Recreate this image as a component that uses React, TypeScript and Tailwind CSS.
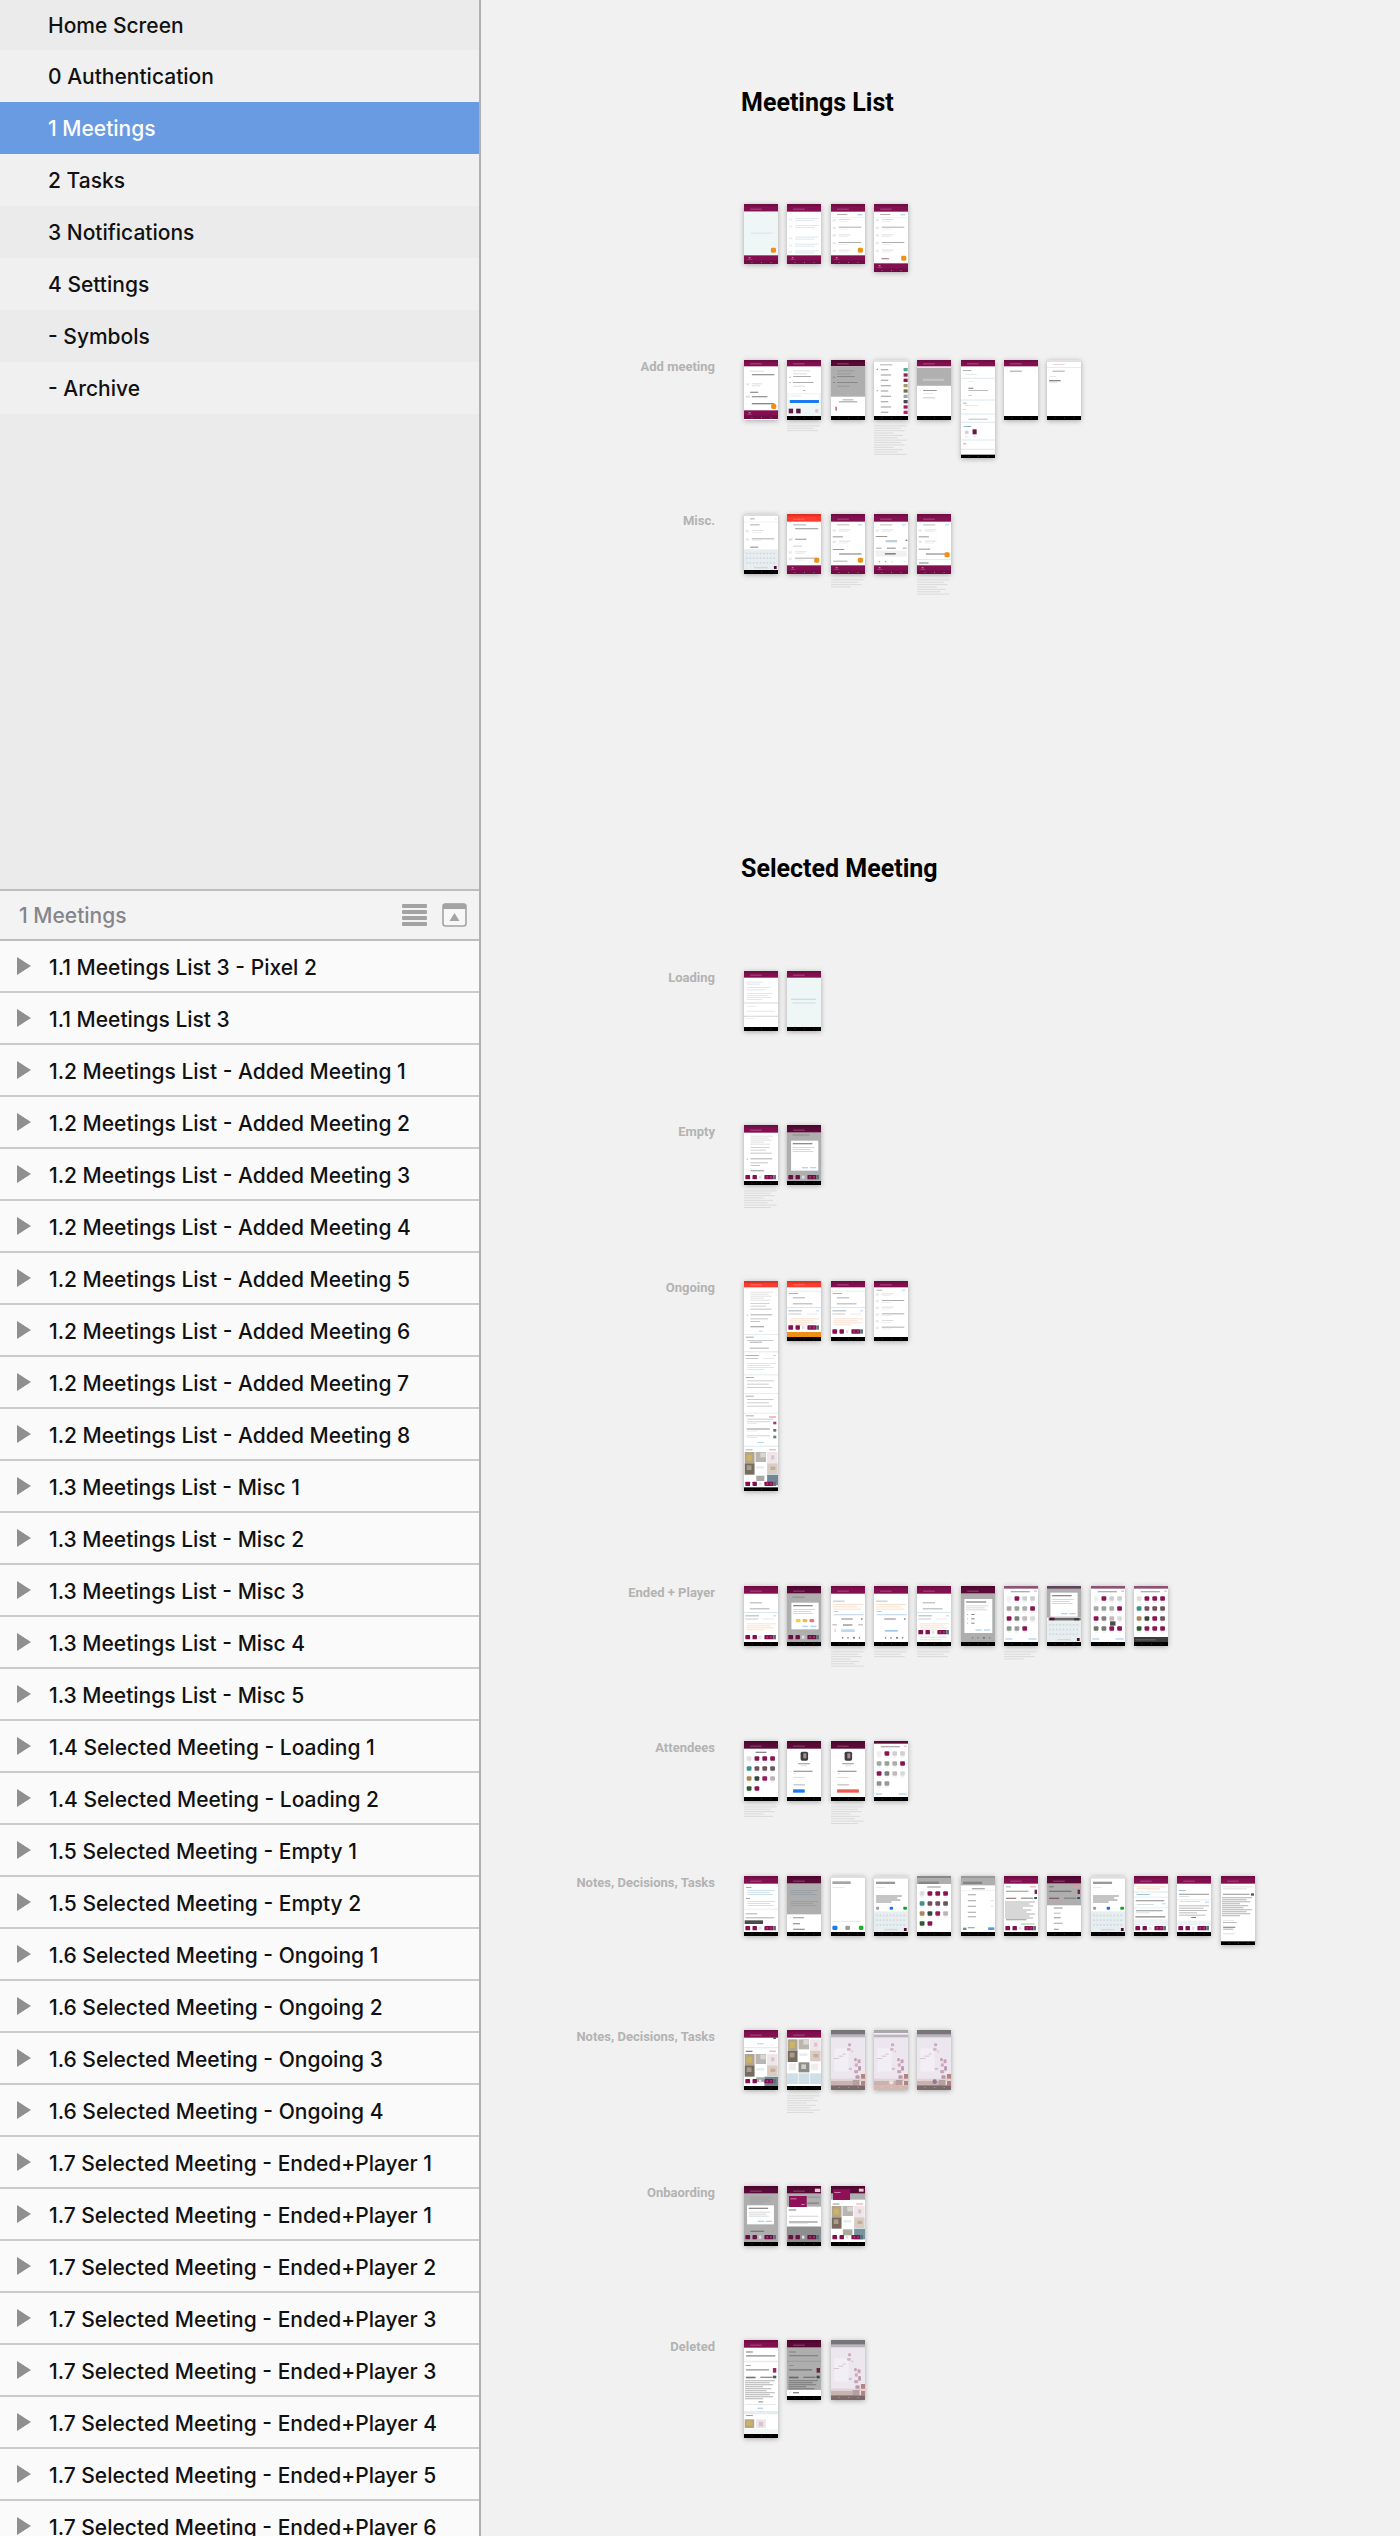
import type { ReactNode } from "react";

type Shape = [x: number, y: number, w: number, h: number, fill: string, round?: number];

const PLUM = "#830f50";
const DARK_PLUM = "#5a0a37";
const RED = "#ff3b2d";
const ORANGE = "#ee9018";
const BLUE = "#1a7af0";
const MINT = "#eef6f6";
const LINK = "#b4d3f1";
const INK = "#aeaeae";
const SOFT = "#dedede";
const MIST = "#e6edf0";
const DIM = "#aeaeae";
const WIDTHS = [1, 0.82, 0.94, 0.6, 0.88, 0.72];

/* Drawing helpers: an artboard is 100 units wide and normally 180 high. */

const lines = (x: number, y: number, w: number, n: number, gap: number, fill = SOFT, h = 3): Shape[] =>
  Array.from({ length: n }, (_, i): Shape => [x, y + i * gap, w * WIDTHS[i % 6], h, fill]);

const bar = (fill = PLUM, h = 23): Shape[] => [
  [0, 0, 100, h, fill],
  [0, 0, 100, 7, "#00000022"],
  [18, h - 9, 34, 3, "#ffffff44"],
];

const nav = (y = 168, h = 12): Shape[] => [
  [0, y, 100, h, "#000000"],
  [22, y + 5, 3, 2, "#4a4a4a"],
  [50, y + 5, 3, 2, "#4a4a4a"],
  [78, y + 5, 3, 2, "#4a4a4a"],
];

const tabs = (y = 154): Shape[] => [
  [0, y, 100, 26, PLUM],
  [0, y + 15, 100, 11, "#00000022"],
  [14, y + 5, 5, 4, "#ffffff77"],
  [10, y + 11, 14, 2, "#ffffff44"],
  [22, y + 20, 3, 3, "#ffffff55"],
  [50, y + 20, 3, 3, "#ffffff55"],
  [78, y + 20, 3, 3, "#ffffff55"],
];

const fab = (x: number, y: number): Shape[] => [[x, y, 15, 15, ORANGE, 4]];

const agenda = (y: number, n: number, gap: number, dark = INK): Shape[] =>
  Array.from({ length: n }).flatMap((_, i): Shape[] => [
    [5, y + i * gap, 9, 7, "#e9e9e9"],
    [23, y + i * gap, i % 2 ? 66 : 34, 3, i % 2 ? dark : SOFT],
    [23, y + 6 + i * gap, 28, 2, "#e6e6e6"],
  ]);

const chips = (y = 150, tone = PLUM): Shape[] => [
  [4, y, 14, 13, tone, 2],
  [25, y, 13, 13, tone, 2],
  [44, y + 2, 7, 9, "#e5dfe3"],
  [60, y, 26, 13, tone, 2],
  [66, y + 3, 5, 7, "#9a3a70"],
  [77, y + 3, 5, 7, "#9a3a70"],
  [86, y, 8, 13, "#5d6f7c"],
];

const keyboard = (y: number, end = 168): Shape[] => [
  [0, y, 100, end - y, "#e7eef0"],
  ...[10, 24, 38].flatMap((dy) =>
    Array.from({ length: 9 }, (_, i): Shape => [6 + i * 10, y + dy, 5, 5, "#d0dade"]),
  ),
  [30, end - 9, 40, 4, "#cfd9dc"],
  [88, end - 12, 8, 9, "#4d0c32"],
];

const dialog = (x: number, y: number, w: number, h: number): Shape[] => [
  [x, y, w, h, "#ffffff"],
  [x + 5, y + 7, w * 0.72, 4, "#8c8c8c"],
  ...lines(x + 5, y + 19, w - 16, 3, 6, "#d8d8d8"),
  [x + w * 0.4, y + h - 11, 18, 4, LINK],
  [x + w * 0.7, y + h - 11, 18, 4, LINK],
];

const FACES = {
  mixed: ["#eeeeee", "#8a1453", "#cfcfcf", "#cfcfcf", "#a6a6a6", "#96a396", "#adadad", "#8a1453", "#8a1453", "#7c7c7c", "#c4b9bd", "#dadada", "#8a968a", "#999999", "#8a1453"],
  late: ["#eeeeee", "#8a1453", "#cfcfcf", "#cfcfcf", "#a6a6a6", "#96a396", "#adadad", "#8a1453", "#8a1453", "#808080", "#c4b9bd", "#dadada", "#6d756d", "#777777", "#8a1453", "#8a1453"],
  color: ["#dddddd", "#8a1453", "#8a1453", "#8a1453", "#3f9088", "#735060", "#6d5257", "#66585c", "#a38a5a", "#35463d", "#961c5c", "#c3aeba", "#31592f", "#8a1453"],
  full: ["#dddddd", "#8a1453", "#8a1453", "#8a1453", "#3f9088", "#735060", "#6d5257", "#66585c", "#a38a5a", "#35463d", "#8a1453", "#695560", "#31592f", "#8a1453", "#8a1453", "#8a1453"],
};

const faces = (y: number, palette: string[], gap = 30): Shape[] =>
  palette.flatMap((fill, i): Shape[] => {
    const x = 8 + (i % 4) * 23;
    const top = y + Math.floor(i / 4) * gap;
    return [
      [x, top, 14, 13, fill, 3],
      [x + 2, top + 16, 10, 2, "#dedede"],
    ];
  });

const people = (fill: string, palette: string[]): Shape[] => [
  [0, 0, 100, 8, fill],
  [20, 15, 56, 4, INK],
  [88, 14, 9, 3, "#f0a6b4"],
  ...faces(31, palette),
  [4, 157, 20, 4, LINK],
  [72, 157, 24, 4, LINK],
  ...nav(),
];

const photos = (y: number): Shape[] => [
  [2, y, 29, 34, "#b3a48f"],
  [8, y + 8, 15, 18, "#cdb463"],
  [34, y, 31, 30, "#b9b5b1"],
  [48, y + 2, 16, 14, "#d9d7d5"],
  [68, y, 31, 34, "#eee6ea"],
  [80, y + 10, 9, 12, "#dcc3cb"],
  [2, y + 34, 29, 34, "#776b60"],
  [8, y + 40, 14, 14, "#a99c8b"],
  [36, y + 42, 24, 8, "#e7eef2"],
  [68, y + 34, 31, 32, "#d9ccc0"],
  [78, y + 44, 14, 10, "#c3ada2"],
];

const blossom = (top: string, bottom: string): Shape[] => [
  [0, 0, 100, 180, "#ece7ef"],
  [10, 55, 42, 70, "#f2eef5"],
  [0, 0, 100, 14, top],
  [0, 14, 100, 8, "#b9b6bb"],
  [8, 84, 16, 3, "#d9c4d1"],
  [22, 77, 14, 3, "#d9c4d1"],
  [34, 71, 9, 3, "#d9c4d1"],
  [50, 40, 9, 9, "#cbabbd", 3],
  [47, 54, 11, 8, "#d3b5c5", 3],
  [60, 62, 5, 5, "#dcc3d0"],
  [68, 84, 8, 10, "#c9a2b6", 3],
  [78, 88, 9, 12, "#c9a2b6", 3],
  [70, 100, 9, 10, "#cfadbe", 3],
  [80, 108, 8, 14, "#bd93aa", 3],
  [68, 120, 12, 10, "#c9a5b8", 3],
  [72, 136, 12, 18, "#bd96aa", 3],
  [52, 113, 10, 7, "#d8becb", 3],
  [88, 132, 12, 34, "#b5827f"],
  [0, 146, 100, 7, "#e0d2d5"],
  [0, 153, 74, 14, "#c9b3af"],
  [64, 150, 20, 16, "#b79f9f"],
  [0, 166, 100, 14, bottom],
  [22, 172, 4, 2, "#ffffff66"],
  [50, 172, 4, 2, "#ffffff66"],
  [78, 172, 4, 2, "#ffffff66"],
];

const section = (y: number, h: number): Shape[] => [
  [0, y, 100, 3, MIST],
  [5, y + 8, 24, 3, INK],
  ...lines(9, y + 18, 78, Math.max(1, Math.floor((h - 18) / 10)), 10, "#cccccc"),
];

const dimmed = (h = 168): Shape[] => [...bar(DARK_PLUM), [0, 23, 100, h - 23, DIM]];
const essay = (y: number, n: number): Shape[] => lines(3, y, 88, n, 6, "#c4c4c4", 4);

interface Board {
  art: Shape[];
  height?: "tall" | "taller" | "longer" | "longest";
  paper?: string;
  note?: number;
}

const HEIGHTS = {
  normal: { units: 180, box: "h-[60px]" },
  tall: { units: 204, box: "h-[68px]" },
  taller: { units: 294, box: "h-[98px]" },
  longer: { units: 207, box: "h-[69px]" },
  longest: { units: 630, box: "h-[210px]" },
};

const meetingDoc: Shape[] = [
  ...lines(19, 32, 66, 5, 6, "#e2e2e2"),
  ...lines(19, 66, 56, 2, 8, "#d2d2d2"),
  [19, 83, 62, 3, "#c6c6c6"],
  [8, 101, 4, 3, "#bbbbbb"],
  [19, 100, 64, 3, INK],
  [19, 112, 52, 3, "#c6c6c6"],
  [19, 120, 28, 3, "#c6c6c6"],
  [19, 135, 40, 4, INK],
];

const orangeNotes = (y: number): Shape[] => [
  [4, y, 40, 3, "#a4b4c4"],
  [86, y, 8, 3, LINK],
  [4, y + 10, 38, 2, INK],
  [56, y + 10, 34, 2, SOFT],
  ...lines(8, y + 24, 86, 4, 6, "#fae0cd"),
];

const ongoing: Shape[] = [
  [0, 29, 100, 3, MIST],
  [5, 36, 28, 3, "#a4b4c4"],
  [17, 49, 36, 3, INK],
  [17, 67, 58, 3, INK],
  [0, 78, 100, 3, "#dbe6ec"],
  ...orangeNotes(88),
];

const player: Shape[] = [
  ...bar(),
  [6, 44, 34, 3, "#b5c0ca"],
  ...lines(6, 54, 88, 3, 7, "#fae0cd"),
  [8, 75, 14, 3, "#a9cdf0"],
  [8, 84, 88, 4, "#cbdff0"],
  [30, 97, 34, 4, "#a5a5a5"],
  [88, 97, 5, 4, "#777777"],
];

const playerControls: Shape[] = [
  [32, 153, 4, 5, "#888888"],
  [48, 153, 4, 5, "#888888"],
  [65, 153, 5, 5, "#666666"],
  [82, 153, 4, 5, "#888888"],
];

const profile = (action: Shape): Shape[] => [
  ...bar(DARK_PLUM),
  [40, 32, 22, 27, "#3c3a42", 5],
  [48, 37, 9, 15, "#a98e86"],
  [33, 66, 34, 4, INK],
  [42, 73, 16, 3, SOFT],
  [8, 90, 3, 3, SOFT],
  [19, 89, 56, 4, "#a0a0a0"],
  [19, 96, 8, 2, SOFT],
  [19, 108, 34, 3, SOFT],
  [19, 130, 34, 3, "#b5b5b5"],
  action,
  ...nav(),
];

const noteEditor: Shape[] = [
  [0, 0, 100, 8, "#dedede"],
  [6, 17, 56, 7, "#999999"],
  [6, 33, 26, 2, SOFT],
  ...lines(6, 58, 76, 4, 6, "#a8a8a8", 4),
  [6, 92, 9, 9, "#9c9c9c", 3],
  [46, 92, 10, 9, "#1673e6", 3],
  [86, 92, 11, 9, "#0fa51f", 3],
  ...keyboard(106),
  ...nav(),
];

const taskList = (shade: boolean): Shape[] => [
  ...(shade ? dimmed(88) : bar()),
  [6, 31, 14, 3, shade ? "#777777" : "#94b0c0"],
  [76, 31, 18, 3, "#f19a9c"],
  [6, 44, 66, 4, shade ? "#777777" : INK],
  [90, 41, 7, 13, "#7d1c50"],
  [6, 65, 30, 4, shade ? "#855f66" : "#a78686"],
  [50, 65, 36, 3, "#777777"],
  [89, 63, 8, 6, "#3e4c5e"],
];

const row1: Board[] = [
  { art: [...bar(), [0, 23, 100, 131, MINT], [20, 86, 64, 3, "#d8e5e8"], ...fab(79, 131), ...tabs()] },
  { art: [...bar(), ...[42, 63, 98, 119, 139].flatMap((y) => [...lines(24, y, 70, 2, 6, "#dfe8ed"), [5, y + 2, 10, 6, "#eeeeee"] as Shape]), ...tabs()] },
  { art: [...bar(), [18, 30, 30, 3, INK], [78, 30, 14, 4, LINK], [0, 41, 100, 1, SOFT], ...agenda(45, 5, 23), ...fab(79, 131), ...tabs()] },
  { art: [...bar(), [18, 30, 30, 3, INK], [78, 30, 14, 4, LINK], [0, 41, 100, 1, SOFT], ...agenda(45, 5, 23), [22, 162, 22, 4, "#b28f96"], ...fab(80, 155), ...tabs(178)], height: "tall" },
];

const row2: Board[] = [
  { art: [...bar(PLUM, 19), [18, 32, 40, 3, SOFT], [23, 42, 66, 4, "#999999"], [7, 70, 8, 6, "#d5f0d8"], ...lines(23, 70, 30, 2, 6), [18, 95, 24, 4, "#999999"], [5, 107, 12, 6, SOFT], [23, 108, 46, 4, "#999999"], [23, 129, 66, 4, "#888888"], ...fab(80, 132), ...tabs(151)] },
  { art: [...bar(PLUM, 19), ...lines(18, 31, 50, 2, 9), [18, 48, 52, 3, INK], [7, 50, 4, 3, INK], [18, 66, 60, 3, INK], [7, 66, 4, 3, INK], [18, 77, 36, 3, SOFT], [48, 90, 6, 3, INK], [0, 99, 100, 69, MINT], [5, 103, 90, 29, "#ffffff"], [8, 107, 34, 2, SOFT], [8, 120, 86, 9, BLUE], [5, 146, 13, 14, "#6d1747"], [27, 146, 13, 14, "#541a40"], [83, 147, 9, 11, "#d9cfd2"], ...nav()], note: 3 },
  { art: [...bar(DARK_PLUM, 19), [0, 19, 100, 91, DIM], ...lines(18, 31, 50, 2, 9, "#999999"), [7, 50, 4, 3, "#777777"], [18, 48, 52, 3, "#888888"], [7, 66, 4, 3, "#777777"], [18, 66, 60, 3, "#888888"], [18, 77, 36, 3, "#999999"], [34, 118, 32, 3, INK], [23, 124, 54, 3, "#999999"], [13, 140, 4, 12, "#a85c68"], ...nav()] },
  { art: [[0, 0, 100, 6, "#e2e2e2"], [18, 13, 36, 3, INK], ...Array.from({ length: 9 }).flatMap((_, i): Shape[] => [[20, 27 + i * 16, i % 2 ? 30 : 22, 4, "#b2b2b2"], [87, 24 + i * 16, 12, 10, ["#56a78f", "#93265d", "#802050", "#a39b6a", "#716f4e", "#9aa6b4", "#4a4650", "#a0195f", "#b32868"][i]]]), [8, 26, 3, 4, "#777777"], [8, 90, 3, 4, "#c98a98"], ...nav()], note: 13 },
  { art: [...bar(PLUM, 19), [0, 23, 100, 53, "#b0b0b0"], [17, 56, 62, 7, "#c4c4c4"], [0, 75, 100, 2, "#c9a0c4"], [8, 90, 3, 3, SOFT], [18, 90, 40, 3, "#999999"], [18, 99, 30, 2, SOFT], [18, 112, 36, 3, "#c9c9c9"], ...nav()] },
  { art: [...bar(PLUM, 19), [6, 30, 24, 3, INK], [10, 42, 36, 2, SOFT], ...[53, 118, 160, 185, 238, 266].map((y): Shape => [0, y, 100, 4, MIST]), [22, 63, 14, 2, SOFT], [22, 83, 14, 4, "#999999"], [22, 90, 58, 3, "#bbbbbb"], [22, 105, 10, 3, "#cccccc"], [6, 128, 10, 3, INK], [10, 135, 40, 2, SOFT], [6, 147, 10, 2, "#e9bfc0"], [22, 176, 56, 3, "#bdbdbd"], [8, 198, 22, 3, "#8faeca"], [12, 212, 10, 10, "#ddcdd4"], [34, 208, 12, 15, "#6b1548"], [12, 229, 8, 3, SOFT], [35, 229, 8, 3, SOFT], [6, 250, 10, 3, "#df9b9b"], ...nav(284, 10)], height: "taller" },
  { art: [...bar(PLUM, 19), [8, 32, 3, 2, SOFT], [18, 32, 34, 3, "#9b9b9b"], [92, 32, 3, 2, SOFT], ...nav()] },
  { art: [[0, 0, 100, 6, "#e2e2e2"], [18, 13, 34, 2, "#dfc4c4"], [0, 21, 100, 2, "#e4dfe2"], [16, 32, 36, 3, "#aaaaaa"], [6, 49, 20, 2, SOFT], [6, 60, 34, 4, "#888888"], [6, 67, 24, 2, SOFT], ...nav()] },
];

const row3: Board[] = [
  { art: [[0, 0, 100, 6, "#dcdcdc"], [18, 13, 13, 3, "#aaaaaa"], [90, 13, 4, 3, SOFT], [0, 23, 100, 2, MIST], [18, 31, 28, 3, INK], ...agenda(48, 2, 25), [18, 98, 24, 3, "#888888"], ...keyboard(106), ...nav()] },
  { art: [...bar(RED), [18, 31, 38, 3, INK], [24, 42, 68, 4, INK], [6, 73, 10, 7, "#cfead2"], [24, 74, 33, 4, INK], [18, 95, 26, 3, "#cccccc"], ...agenda(112, 2, 19), ...fab(80, 131), ...tabs()] },
  { art: [...bar(), [18, 31, 36, 3, "#bbbbbb"], [78, 31, 14, 3, LINK], ...agenda(46, 1, 23), [5, 67, 30, 3, "#999999"], ...agenda(80, 1, 20), [5, 105, 34, 3, "#999999"], [24, 118, 66, 4, "#999999"], [6, 140, 42, 3, INK], ...fab(79, 131), ...tabs()], note: 4 },
  { art: [...bar(), [18, 31, 36, 3, "#bbbbbb"], [82, 31, 12, 3, LINK], ...agenda(46, 1, 23), [5, 66, 34, 3, "#999999"], [34, 78, 34, 7, "#c0d0dc"], [93, 77, 5, 4, "#777777"], [6, 101, 16, 3, INK], [38, 101, 26, 3, "#888888"], [84, 101, 12, 3, INK], [4, 110, 92, 18, "#f1f1f1"], [32, 117, 32, 5, "#888888"], [14, 141, 4, 4, INK], [32, 141, 4, 4, INK], [50, 141, 4, 4, SOFT], [88, 141, 4, 4, SOFT], ...tabs()] },
  { art: [...bar(), [18, 31, 36, 3, "#bbbbbb"], [82, 31, 12, 3, LINK], ...agenda(46, 1, 23), [5, 67, 30, 3, "#999999"], ...agenda(80, 1, 20), [5, 104, 34, 3, "#999999"], [26, 118, 60, 4, "#999999"], [0, 136, 100, 2, SOFT], [6, 144, 28, 6, "#c0c0c0"], ...fab(81, 115), ...tabs()], note: 7 },
];

const loading: Board[] = [
  { art: [...bar(PLUM, 20), ...lines(8, 32, 48, 2, 6, "#dce8ef"), ...lines(8, 48, 68, 2, 7, "#dfe8ed"), ...lines(8, 66, 76, 4, 6, "#dfe8ed"), [0, 94, 100, 4, "#e2e2e2"], [8, 106, 30, 2, "#e5e5e5"], [8, 119, 84, 3, "#e2e8ec"], [0, 134, 100, 4, "#dedede"], [8, 142, 24, 2, "#e8e8e8"], ...nav()] },
  { art: [...bar(PLUM, 20), [12, 83, 74, 4, "#c9dfe4"], [16, 94, 68, 4, "#d3e5e9"], ...nav()], paper: MINT },
];

const empty: Board[] = [
  { art: [...bar(), ...meetingDoc, ...chips(), ...nav()], note: 8 },
  { art: [...dimmed(), [16, 28, 50, 4, "#949494"], ...dialog(12, 47, 80, 90), ...chips(150, "#690f42"), ...nav()] },
];

const ongoingRow: Board[] = [
  {
    art: [
      ...bar(RED, 19), ...meetingDoc, [44, 149, 10, 3, LINK],
      ...section(159, 12), [17, 182, 36, 3, INK], [17, 200, 56, 3, INK],
      [0, 211, 100, 3, "#dbe6ec"], ...orangeNotes(222),
      ...section(280, 48), ...section(336, 52),
      ...section(395, 0), [74, 406, 20, 4, "#f29a9c"],
      ...[420, 442, 462].flatMap((y, i): Shape[] => [[8, y, 68, 4, i === 1 ? INK : SOFT], [8, y + 7, 30, 2, SOFT], [86, y + 2, 9, 8, ["#a33a6e", "#756a72", "#5e8579"][i]]]),
      [40, 483, 18, 3, LINK], [0, 494, 100, 4, MIST], [5, 505, 20, 3, INK], [74, 505, 20, 3, "#f29a9c"],
      ...photos(513), [68, 581, 32, 32, "#708795"], [36, 584, 24, 16, "#a9abab"], ...chips(602), ...nav(619),
    ],
    height: "longest",
  },
  { art: [...bar(RED, 19), ...ongoing, ...chips(133), [0, 153, 100, 15, ORANGE], ...nav()] },
  { art: [...bar(PLUM, 19), ...ongoing, ...chips(145), ...nav()] },
  { art: [...bar(PLUM, 19), [8, 26, 16, 3, INK], [82, 26, 10, 3, LINK], ...agenda(37, 6, 20), ...nav()] },
];

const ended: Board[] = [
  { art: [...bar(), ...ongoing.slice(2), ...chips(147), ...nav()] },
  { art: [...dimmed(), [16, 32, 36, 3, "#8c8c8c"], ...dialog(13, 50, 80, 80), [26, 99, 14, 10, "#f2cf45", 4], [46, 99, 14, 10, "#f3ba46", 4], [66, 99, 14, 10, "#ed7373", 4], ...chips(147, "#690f42"), ...nav()] },
  { art: [...player, [4, 115, 14, 3, INK], [35, 115, 28, 4, "#8f8f8f"], [80, 115, 14, 3, INK], [10, 128, 4, 10, "#f3cccc"], [30, 130, 40, 8, "#bdd9f3"], ...playerControls, ...nav()], note: 7 },
  { art: [...player, [32, 132, 38, 5, "#9fc7ee"], ...playerControls, ...nav()], note: 3 },
  { art: [...bar(), ...ongoing.slice(2), ...chips(132), ...lines(8, 152, 80, 2, 8), ...nav()], note: 3 },
  { art: [...dimmed(), ...dialog(10, 39, 82, 102), ...[84, 97, 110].flatMap((y): Shape[] => [[18, y, 3, 3, INK], [30, y, 10, 3, "#888888"]]), ...playerControls, ...nav()] },
  { art: people("#8c5374", FACES.mixed), note: 4 },
  { art: [[0, 0, 100, 95, DIM], [0, 0, 100, 8, "#62435a"], ...dialog(10, 20, 80, 72), [5, 96, 94, 8, "#666666"], [8, 95, 14, 8, "#58102f"], [80, 96, 14, 8, "#3d3d3d"], ...keyboard(104), ...nav()] },
  { art: [...people("#8c5374", FACES.late), [56, 106, 16, 13, "#4d4d4d"]] },
  { art: [...people("#8c5374", FACES.full), [0, 153, 100, 15, "#3b3b3b"], [4, 160, 60, 3, "#666666"]] },
];

const attendees: Board[] = [
  { art: [...bar(DARK_PLUM), [34, 32, 32, 4, "#888888"], ...faces(46, FACES.color), ...nav()], note: 5 },
  { art: profile([18, 145, 34, 10, BLUE]) },
  { art: profile([18, 145, 64, 10, "#ee5c50"]), note: 8 },
  { art: people(DARK_PLUM, FACES.mixed.slice(0, 14)) },
];

const notes: Board[] = [
  { art: [...bar(), [6, 33, 16, 3, "#aaaaaa"], ...lines(10, 42, 80, 3, 6, "#cfe0ee"), [6, 66, 12, 3, "#aaaaaa"], ...lines(10, 75, 82, 3, 6, "#cfe0ee"), [0, 98, 100, 3, MIST], [5, 112, 34, 3, INK], [5, 124, 84, 3, INK], [2, 133, 54, 11, "#4a4a4a"], ...chips(150), ...nav()] },
  { art: [...dimmed(115), ...lines(10, 42, 80, 3, 6, "#99a1a7"), ...lines(10, 75, 82, 3, 6, "#99a1a7"), [8, 123, 4, 4, SOFT], [18, 123, 32, 4, INK], [18, 141, 20, 4, "#999999"], [18, 158, 34, 4, "#999999"], ...nav()] },
  { art: [[0, 0, 100, 6, "#dedede"], [4, 16, 54, 8, "#a5a5a5"], [4, 33, 36, 2, SOFT], [4, 135, 82, 2, "#dedede"], [4, 149, 15, 13, BLUE, 4], [42, 149, 14, 13, "#9b9b9b", 4], [82, 149, 13, 13, "#16b429", 4], ...nav()] },
  { art: noteEditor },
  { art: [[0, 0, 100, 24, DIM], [0, 0, 100, 6, "#888888"], [4, 17, 60, 7, "#858585"], [30, 31, 40, 4, INK], ...faces(46, FACES.color), ...nav()] },
  { art: [[0, 0, 100, 28, DIM], [0, 0, 100, 6, "#999999"], [6, 17, 56, 7, "#858585"], [32, 36, 38, 4, INK], [0, 43, 100, 1, SOFT], ...[54, 72, 89, 107, 120].flatMap((y): Shape[] => [[20, y, 24, 4, "#bababa"]]), [88, 72, 7, 3, SOFT], [88, 89, 7, 3, SOFT], [6, 155, 10, 7, "#62958c"], [20, 153, 20, 4, INK], [80, 154, 18, 8, "#4a99ee"], ...nav()] },
  { art: [...taskList(false), ...essay(76, 9), [6, 129, 60, 4, INK], [50, 142, 40, 4, "#a9dfa9"], ...chips(150), ...nav()] },
  { art: [...taskList(true), [20, 94, 26, 4, "#aaaaaa"], [20, 110, 20, 3, "#bbbbbb"], [20, 123, 20, 4, "#aaaaaa"], [20, 140, 26, 4, "#bbbbbb"], [20, 158, 14, 4, "#aaaaaa"], ...nav()] },
  { art: noteEditor },
  { art: [...bar(), ...lines(8, 31, 84, 2, 6, "#f6dfca"), [0, 46, 100, 4, MIST], [8, 54, 38, 3, "#9fbfd2"], [0, 62, 100, 3, MIST], [5, 72, 84, 4, "#a5a5a5"], [8, 84, 50, 3, "#d5dce0"], [82, 82, 12, 3, LINK], [0, 94, 100, 3, MIST], [6, 102, 78, 4, INK], [6, 109, 40, 3, SOFT], [4, 120, 88, 5, "#a5a5a5"], [0, 130, 100, 18, "#edf2f4"], ...chips(150), ...nav()] },
  { art: [...bar(), [6, 42, 20, 3, "#9fbfd2"], [6, 53, 88, 4, INK], [6, 60, 30, 3, SOFT], [0, 70, 100, 3, MIST], [8, 75, 60, 3, SOFT], [82, 77, 12, 3, LINK], ...lines(6, 88, 88, 5, 7, "#bdbdbd"), [42, 123, 14, 3, "#777777"], [0, 134, 100, 14, "#edf2f4"], ...chips(150), ...nav()] },
  { art: [...bar(), ...lines(6, 31, 86, 2, 6), [6, 53, 78, 4, INK], [88, 52, 9, 7, "#555555"], ...essay(63, 10), [6, 132, 32, 2, SOFT], [6, 138, 40, 3, "#bbbbbb"], [6, 152, 36, 4, "#999999"], [6, 158, 30, 3, INK], [6, 172, 36, 3, SOFT], ...nav(196, 11)], height: "longer" },
];

const media: Board[] = [
  { art: [...bar(), [86, 22, 8, 5, "#3d5560"], [38, 40, 20, 3, LINK], [0, 51, 100, 4, MIST], [5, 62, 20, 4, "#888888"], [74, 62, 20, 3, "#f29a9c"], ...photos(72), [60, 140, 40, 28, "#6f858f"], [36, 142, 24, 14, "#9da9a5"], ...chips(147), ...nav()] },
  { art: [...bar(), ...photos(28), [34, 97, 32, 30, "#8d8d86"], [42, 103, 14, 14, "#c9cfcc"], [5, 101, 22, 20, "#f1ecee"], [70, 101, 22, 20, "#f1ecee"], [0, 130, 32, 32, "#cfdfe7"], [34, 130, 32, 32, "#cfdfe7"], [68, 130, 32, 32, "#cfdfe7"], ...nav()], note: 8 },
  { art: blossom("#77757a", "#7b6a6b") },
  { art: [...blossom("#f0eef1", "#d5b7b0"), [0, 0, 100, 9, "#aaa7ac"], [44, 150, 14, 14, "#e8dedd", 7]] },
  { art: [...blossom("#77757a", "#7b6a6b"), [46, 148, 12, 14, "#8c7d8c", 5]] },
];

const onboarding: Board[] = [
  { art: [...dimmed(), ...lines(18, 32, 66, 4, 6, "#a2a2a2"), ...dialog(9, 58, 79, 57), [19, 134, 40, 4, "#777777"], ...chips(147, "#690f42"), ...nav()] },
  { art: [...dimmed(), [82, 8, 16, 10, "#e6c8d7"], [60, 32, 36, 3, "#8f8f8f"], [60, 50, 34, 3, "#777777"], [0, 62, 100, 60, "#ffffff"], [5, 70, 22, 4, "#9b9b9b"], [6, 89, 86, 4, SOFT], [6, 106, 84, 4, "#9b9b9b"], [6, 112, 56, 2, SOFT], [0, 122, 100, 46, "#8e8e8e"], [6, 30, 52, 33, "#8f1059"], [10, 37, 18, 3, "#c981a8"], [42, 54, 10, 3, "#c981a8"], ...chips(147, "#690f42"), ...nav()] },
  { art: [...bar(DARK_PLUM), [82, 8, 14, 9, "#e6c8d7"], [0, 23, 100, 18, DIM], [6, 10, 50, 32, "#8f1059"], [10, 18, 18, 3, "#c981a8"], [5, 52, 20, 4, INK], [74, 52, 20, 4, "#f0b3b6"], ...photos(60), [68, 128, 32, 32, "#7594a0"], [35, 130, 28, 18, "#a9aa9c"], ...chips(147), ...nav()] },
];

const deleted: Board[] = [
  { art: [...bar(), [6, 34, 20, 4, "#999999"], [6, 45, 86, 5, "#a5a5a5"], [0, 62, 100, 5, MIST], [6, 75, 14, 3, "#94b0c0"], [6, 87, 68, 5, INK], [85, 84, 10, 14, "#922d60"], [6, 110, 28, 5, "#777777"], [48, 110, 36, 4, "#8e8e8e"], [85, 107, 10, 8, "#4c5b5e"], ...essay(120, 10), [42, 184, 14, 3, "#888888"], [4, 192, 90, 2, SOFT], [40, 203, 16, 4, LINK], [0, 213, 100, 10, MIST], [6, 225, 20, 3, "#80b0b0"], [2, 238, 28, 26, "#b8a583"], [8, 242, 14, 14, "#cdb463"], [36, 238, 28, 26, "#eee4e8"], [44, 245, 12, 14, "#dcc3cb"], [0, 268, 100, 14, MINT], ...nav(282)], height: "taller" },
  { art: [...dimmed(150), [6, 34, 20, 4, "#8c8c8c"], [6, 45, 86, 4, "#848484"], [0, 62, 100, 4, "#a0a0a0"], [6, 75, 14, 3, "#8a8f92"], [6, 87, 68, 5, "#808080"], [87, 84, 10, 14, "#67263f"], [6, 110, 28, 5, "#666666"], [48, 110, 36, 4, "#777777"], [87, 107, 9, 8, "#38464c"], ...lines(5, 120, 86, 5, 6, "#858585", 4), [6, 156, 4, 4, SOFT], [18, 156, 17, 4, "#888888"], ...nav()] },
  { art: blossom("#77757a", "#7b6a6b") },
];

function Artboard({ art, height, paper = "#ffffff", note }: Board) {
  const size = HEIGHTS[height ?? "normal"];
  return (
    <figure className="flex w-[34px] flex-col gap-[5px]" aria-hidden="true">
      <svg
        className={`w-full bg-white shadow-[0_1px_5px_rgba(0,0,0,0.3)] ${size.box}`}
        viewBox={`0 0 100 ${size.units}`}
        preserveAspectRatio="none"
      >
        <rect width="100" height={size.units} fill={paper} />
        {art.map(([x, y, w, h, fill, round], i) => (
          <rect key={i} x={x} y={y} width={w} height={h} fill={fill} rx={round} />
        ))}
      </svg>
      {note ? (
        <svg className="w-full" viewBox={`0 0 100 ${note * 7}`}>
          {lines(0, 1, 96, note, 7, "#dadada", 3).map(([x, y, w, h, fill], i) => (
            <rect key={i} x={x} y={y} width={w} height={h} fill={fill} />
          ))}
        </svg>
      ) : null}
    </figure>
  );
}

function Strip({ label, boards, size }: { label?: string; boards: Board[]; size: string }) {
  return (
    <div className={`flex shrink-0 gap-[29px] ${size}`}>
      <h3 className="w-[234px] shrink-0 text-right text-[13px] leading-[14px] font-bold whitespace-nowrap text-[#b3b3b3]">
        {label}
      </h3>
      <div className="grid w-[520px] shrink-0 grid-cols-12 items-start">
        {boards.map((board, i) => (
          <Artboard key={i} {...board} />
        ))}
      </div>
    </div>
  );
}

function Title({ children, size }: { children: ReactNode; size: string }) {
  return <h2 className={`shrink-0 pl-[260px] text-[25px] leading-[28px] font-bold text-black ${size}`}>{children}</h2>;
}

const pages = ["Home Screen", "0 Authentication", "1 Meetings", "2 Tasks", "3 Notifications", "4 Settings", "- Symbols", "- Archive"];

const layers = [
  "1.1 Meetings List 3 - Pixel 2",
  "1.1 Meetings List 3",
  ...[1, 2, 3, 4, 5, 6, 7, 8].map((n) => `1.2 Meetings List - Added Meeting ${n}`),
  ...[1, 2, 3, 4, 5].map((n) => `1.3 Meetings List - Misc ${n}`),
  ...[1, 2].map((n) => `1.4 Selected Meeting - Loading ${n}`),
  ...[1, 2].map((n) => `1.5 Selected Meeting - Empty ${n}`),
  ...[1, 2, 3, 4].map((n) => `1.6 Selected Meeting - Ongoing ${n}`),
  ...[1, 1, 2, 3, 3, 4, 5, 6].map((n) => `1.7 Selected Meeting - Ended+Player ${n}`),
];

function Sidebar() {
  return (
    <aside className="flex w-[481px] shrink-0 flex-col border-r-2 border-[#b0b0b0] bg-[#ebebeb] font-['Inter',sans-serif] text-[21px] leading-7 font-medium text-[#111111]">
      <nav className="h-[889px] shrink-0">
        {pages.map((page, i) => {
          const tone = page === "1 Meetings" ? "bg-[#699be2] text-white" : i % 2 ? "bg-[#f0f0f0]" : "bg-[#ebebeb]";
          return (
            <button key={page} type="button" className={`flex w-full items-center pt-[2px] pl-12 text-left ${i === 0 ? "h-[50px]" : "h-[52px]"} ${tone}`}>
              {page}
            </button>
          );
        })}
      </nav>
      <header className="flex h-[52px] shrink-0 items-center border-y-2 border-[#bdbdbd] bg-[#f3f3f3] pr-3 pl-[19px] text-[#85858b]">
        <h1 className="grow pt-[2px]">1 Meetings</h1>
        <button type="button" className="mr-[15px]" aria-label="List">
          <svg className="block h-[22px] w-[25px] fill-[#a3a3a3]" viewBox="0 0 25 22">
            <rect y="0" width="25" height="4" rx="1" />
            <rect y="6" width="25" height="4" rx="1" />
            <rect y="12" width="25" height="4" rx="1" />
            <rect y="18" width="25" height="4" rx="1" />
          </svg>
        </button>
        <button type="button" aria-label="Collapse">
          <svg className="block h-6 w-[25px]" viewBox="0 0 25 24">
            <rect x="1" y="1" width="23" height="22" rx="2.5" fill="#f7f7f7" stroke="#a3a3a3" strokeWidth="1.6" />
            <path d="M1 6V3a2.500 2.500 0 0 1 2.500-2.500h18A2.500 2.500 0 0 1 24 3v3z" fill="#a3a3a3" />
            <path d="M7.500 18l5-8 5 8z" fill="#a3a3a3" />
          </svg>
        </button>
      </header>
      <ul className="min-h-0 flex-1 overflow-hidden bg-[#fafafa]">
        {layers.map((layer, i) => (
          <li key={i}>
            <button type="button" className="flex h-[52px] w-full items-center gap-[18px] border-b-2 border-[#cbcbcb] pl-[17px] text-left whitespace-nowrap">
              <svg className="h-[18px] w-[14px] fill-[#8f8f8f]" viewBox="0 0 14 18">
                <path d="M0 0l14 9-14 9z" />
              </svg>
              <span className="pt-[3px]">{layer}</span>
            </button>
          </li>
        ))}
      </ul>
    </aside>
  );
}

export default function App() {
  return (
    <div className="flex h-screen overflow-hidden bg-[#f1f1f1]">
      <Sidebar />
      <main className="flex min-w-0 flex-1 flex-col overflow-hidden pt-[89px] font-['Roboto',sans-serif]">
        <Title size="h-[115px]">Meetings List</Title>
        <Strip boards={row1} size="h-[156px]" />
        <Strip label="Add meeting" boards={row2} size="h-[154px]" />
        <Strip label="Misc." boards={row3} size="h-[341px]" />
        <Title size="h-[116px]">Selected Meeting</Title>
        <Strip label="Loading" boards={loading} size="h-[154px]" />
        <Strip label="Empty" boards={empty} size="h-[156px]" />
        <Strip label="Ongoing" boards={ongoingRow} size="h-[305px]" />
        <Strip label="Ended + Player" boards={ended} size="h-[155px]" />
        <Strip label="Attendees" boards={attendees} size="h-[135px]" />
        <Strip label="Notes, Decisions, Tasks" boards={notes} size="h-[154px]" />
        <Strip label="Notes, Decisions, Tasks" boards={media} size="h-[156px]" />
        <Strip label="Onbaording" boards={onboarding} size="h-[154px]" />
        <Strip label="Deleted" boards={deleted} size="h-[196px]" />
      </main>
    </div>
  );
}
